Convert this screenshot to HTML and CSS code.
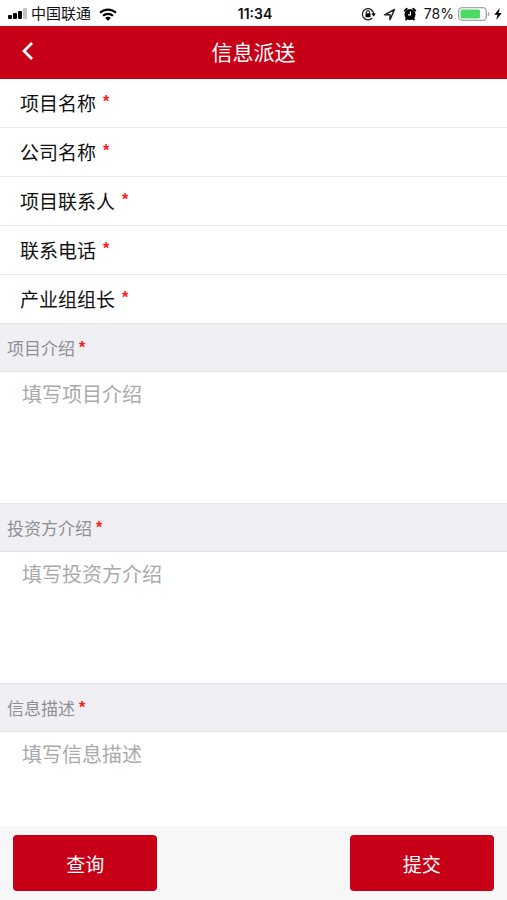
FILE: index.html
```html
<!DOCTYPE html>
<html lang="zh-CN">
<head>
<meta charset="utf-8">
<meta name="viewport" content="width=device-width, initial-scale=1">
<title>信息派送</title>
<link rel="stylesheet" href="styles.css">
</head>
<body>
<div class="status">
  <div class="status-left">
    <svg class="signal" width="20" height="12" viewBox="0 0 20 12" aria-hidden="true">
      <rect x="0" y="7" width="4" height="4" rx="1"/>
      <rect x="5" y="5" width="4" height="6" rx="1"/>
      <rect x="10" y="3" width="4" height="8" rx="1"/>
      <rect x="15" y="0" width="4" height="11" rx="1" fill="#c4c4c4"/>
    </svg>
    <span class="carrier">中国联通</span>
    <svg class="wifi" width="18" height="13" viewBox="0 0 18 13" aria-hidden="true">
      <g fill="none" stroke="#000" stroke-width="2.2">
        <path d="M1 4.8a11.6 11.6 0 0 1 16 0"/>
        <path d="M4 7.8a7.4 7.4 0 0 1 10 0"/>
      </g>
      <path d="M6.200 10a4.200 4.200 0 0 1 5.600 0L9 12.800z"/>
    </svg>
  </div>
  <span class="time">11:34</span>
  <div class="status-right">
    <svg width="15" height="14" viewBox="0 0 15 14" aria-hidden="true">
      <path d="M11.300 10.800A5.600 5.600 0 1 1 12.600 7" fill="none" stroke="#222" stroke-width="1.300"/>
      <path d="M10.300 6.600h4.600L12.600 9.600z"/>
      <rect x="4.500" y="6.200" width="5" height="4" rx=".5"/>
      <path d="M5.400 6.500V5.200a1.600 1.600 0 0 1 3.200 0v1.300" fill="none" stroke="#000"/>
    </svg>
    <svg width="13" height="13" viewBox="0 0 13 13" aria-hidden="true">
      <path d="M1.500 6.800 11.500 1.500 7 11.700V6.800z" fill="none" stroke="#222" stroke-width="1.500" stroke-linejoin="round"/>
    </svg>
    <svg width="14" height="14" viewBox="0 0 14 14" aria-hidden="true">
      <circle cx="7" cy="7.500" r="5.500"/>
      <path d="M1.600 3.600 3.800 1.600M10.200 1.600l2.200 2M3.800 11.600 3 12.600M10.200 11.600l.8 1" stroke="#000" stroke-width="1.800" stroke-linecap="round"/>
      <path d="M7.400 4.500v3.400H5" fill="none" stroke="#fff" stroke-width="1.200"/>
    </svg>
    <span class="percent">78%</span>
    <svg width="32" height="14" viewBox="0 0 32 14" aria-hidden="true">
      <rect x=".7" y=".7" width="27.600" height="12.600" rx="3.500" fill="#fff" stroke="#a5a5a5" stroke-width="1.300"/>
      <rect x="2.500" y="2.500" width="19.500" height="9" rx="1.500" fill="#4cd964"/>
      <path d="M29.800 4.800q1.700.5 1.700 2.200t-1.700 2.200z" fill="#a5a5a5"/>
    </svg>
    <svg width="8" height="12" viewBox="0 0 8 12" aria-hidden="true">
      <path d="M5.800 0 .3 6.800h3.200L2.200 12 7.800 4.900H4.600z"/>
    </svg>
  </div>
</div>

<header class="navbar">
  <button class="back" type="button" aria-label="返回">
    <svg width="12" height="20" viewBox="0 0 12 20" aria-hidden="true">
      <path d="M10 2 2 10l8 8" fill="none" stroke="#fff" stroke-width="2.800"/>
    </svg>
  </button>
  <h1 class="title">信息派送</h1>
</header>

<form class="form">
  <div class="fields">
    <div class="field"><label for="project">项目名称<span class="req">*</span></label><input id="project" type="text"></div>
    <div class="field"><label for="company">公司名称<span class="req">*</span></label><input id="company" type="text"></div>
    <div class="field"><label for="contact">项目联系人<span class="req">*</span></label><input id="contact" type="text"></div>
    <div class="field"><label for="phone">联系电话<span class="req">*</span></label><input id="phone" type="tel"></div>
    <div class="field"><label for="leader">产业组组长<span class="req">*</span></label><input id="leader" type="text"></div>
  </div>
  <section class="block">
    <label class="block-label" for="intro">项目介绍<span class="req">*</span></label>
    <textarea id="intro" placeholder="填写项目介绍"></textarea>
  </section>
  <section class="block">
    <label class="block-label" for="investor">投资方介绍<span class="req">*</span></label>
    <textarea id="investor" placeholder="填写投资方介绍"></textarea>
  </section>
  <section class="block block-last">
    <label class="block-label" for="desc">信息描述<span class="req">*</span></label>
    <textarea id="desc" placeholder="填写信息描述"></textarea>
  </section>
  <footer class="actions">
    <button class="btn" type="button">查询</button>
    <button class="btn" type="submit">提交</button>
  </footer>
</form>
</body>
</html>
```
FILE: styles.css
```css
* {
  box-sizing: border-box;
}

body {
  margin: 0;
  min-height: 100vh;
  display: flex;
  flex-direction: column;
  background: #fff;
  color: #111;
  font-family: "Liberation Sans", "Noto Sans CJK SC", sans-serif;
}

button,
input,
textarea {
  font: inherit;
  border: 0;
  padding: 0;
  margin: 0;
  background: none;
}

svg {
  display: block;
  flex: none;
}

.status {
  display: grid;
  grid-template-columns: 1fr auto 1fr;
  align-items: center;
  height: 26px;
  padding: 2px 5px 0 8px;
  font-size: 15px;
  line-height: 24px;
}

.status-left,
.status-right {
  display: flex;
  align-items: center;
}

.carrier {
  margin: 0 8px 0 3px;
}

.time {
  font-family: Inter, sans-serif;
  font-weight: 600;
  font-size: 14px;
}

.status-right {
  justify-content: flex-end;
  gap: 7px;
}

.percent {
  font-family: Inter, sans-serif;
  font-size: 14px;
}

.status-right svg:nth-last-child(-n+2) {
  margin-left: -3px;
}

.navbar {
  display: grid;
  grid-template-columns: 56px 1fr 56px;
  align-items: center;
  height: 53px;
  background: #c70017;
  color: #fff;
}

.back {
  display: flex;
  align-items: center;
  height: 100%;
  padding: 0 0 4px 22px;
}

.title {
  margin: 0;
  font-size: 21px;
  font-weight: 400;
  line-height: 32px;
  text-align: center;
}

.form {
  flex: 1;
  display: flex;
  flex-direction: column;
}

.field {
  display: flex;
  align-items: center;
  height: 49px;
  padding: 0 20px;
  border-bottom: 1px solid #e8e8e8;
  font-size: 19px;
}

.field:last-child {
  height: 48px;
  border-bottom: 0;
}

.field label {
  display: flex;
  align-items: center;
  gap: 7px;
  padding-bottom: 2px;
}

.field input {
  flex: 1;
  min-width: 0;
  margin-left: 12px;
}

.req {
  color: #ff1a1a;
  font-size: 16px;
  font-weight: 700;
  line-height: 20px;
}

.block-label {
  display: flex;
  align-items: center;
  gap: 4px;
  height: 49px;
  padding: 0 7px;
  border: solid #e3e3e6;
  border-width: 1px 0;
  background: #efeff4;
  color: #8f8f94;
  font-size: 17px;
}

.block textarea {
  display: block;
  width: 100%;
  height: 131px;
  padding: 8px 22px;
  resize: none;
  font-size: 20px;
  line-height: 30px;
}

.block textarea::placeholder {
  color: #aaa;
  opacity: 1;
}

.block-last {
  flex: 1;
  display: flex;
  flex-direction: column;
}

.block-last textarea {
  flex: 1;
  height: auto;
  min-height: 90px;
}

.actions {
  display: flex;
  justify-content: space-between;
  padding: 9px 13px;
  background: #f7f7f7;
}

.btn {
  width: 30%;
  height: 56px;
  border-radius: 4px;
  background: #c70017;
  color: #fff;
  font-size: 19px;
}
```
